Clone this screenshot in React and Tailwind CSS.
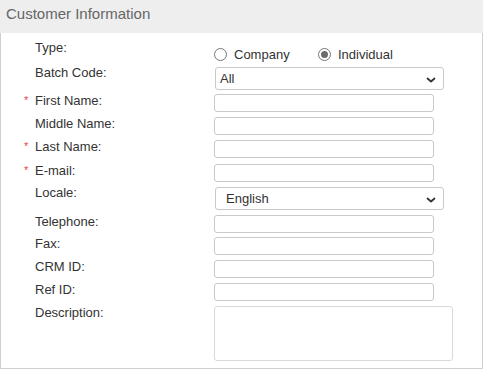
import React from "react";

const Chevron = () => (
  <svg width="10" height="6" viewBox="0 0 10 6" className="absolute right-[7px] top-[9px]">
    <polyline points="1.5,1.5 5,4.5 8.5,1.5" fill="none" stroke="#333" strokeWidth="1.8" strokeLinecap="round" strokeLinejoin="round" />
  </svg>
);

const Radio = ({ checked }) => (
  <span className="inline-flex items-center justify-center w-[13px] h-[13px] rounded-full border border-[#767676] bg-white">
    {checked && <span className="w-[7px] h-[7px] rounded-full bg-[#6b6b6b]" />}
  </span>
);

const Row = ({ label, req, h, children }) => (
  <div className={`flex ${h}`}>
    <div className="w-[213px] flex pl-[23px] shrink-0">
      <span className="w-[11px] text-[11px] leading-[15px] text-[#e8423f]">{req ? "*" : ""}</span>
      <span className="text-[13px] leading-[15px] text-[#333]">{label}</span>
    </div>
    <div>{children}</div>
  </div>
);

const Input = () => (
  <div className="mt-[1px] w-[220px] h-[18px] border border-[#c9c9c9] rounded-[3px] bg-white" />
);

const Select = ({ value, pl }) => (
  <div className={`relative mt-[2px] ml-[1px] w-[229px] h-[23px] border border-[#c9c9c9] rounded-[3px] bg-white text-[13px] leading-[21px] text-[#333] ${pl}`}>
    {value}
    <Chevron />
  </div>
);

export default function App() {
  return (
    <div className="w-[483px] h-[370px] bg-white" style={{ fontFamily: '"Liberation Sans", Arial, sans-serif' }}>
      <div className="h-[33px] bg-[#eeeeee] pl-[6px] pt-[5px] text-[15px] leading-[18px] text-[#666]">Customer Information</div>
      <div className="h-[336px] border-l border-r border-b border-[#cfcfcf] pt-[7px] flex flex-col">
        <Row label="Type:" h="h-[25px]">
          <div className="flex items-center mt-[8px] text-[13px] leading-[13px] text-[#333]">
            <Radio />
            <span className="ml-[7px] w-[84px]">Company</span>
            <Radio checked />
            <span className="ml-[7px]">Individual</span>
          </div>
        </Row>
        <Row label="Batch Code:" h="h-[28px]">
          <Select value="All" pl="pl-[4px]" />
        </Row>
        <Row label="First Name:" req h="h-[23px]"><Input /></Row>
        <Row label="Middle Name:" h="h-[23px]"><Input /></Row>
        <Row label="Last Name:" req h="h-[24px]"><Input /></Row>
        <Row label="E-mail:" req h="h-[22px]"><Input /></Row>
        <Row label="Locale:" h="h-[29px]">
          <Select value="English" pl="pl-[10px]" />
        </Row>
        <Row label="Telephone:" h="h-[22px]"><Input /></Row>
        <Row label="Fax:" h="h-[23px]"><Input /></Row>
        <Row label="CRM ID:" h="h-[23px]"><Input /></Row>
        <Row label="Ref ID:" h="h-[23px]"><Input /></Row>
        <Row label="Description:" h="h-[60px]">
          <div className="mt-[1px] w-[239px] h-[55px] border border-[#d9d9d9] rounded-[3px] bg-white" />
        </Row>
      </div>
    </div>
  );
}
